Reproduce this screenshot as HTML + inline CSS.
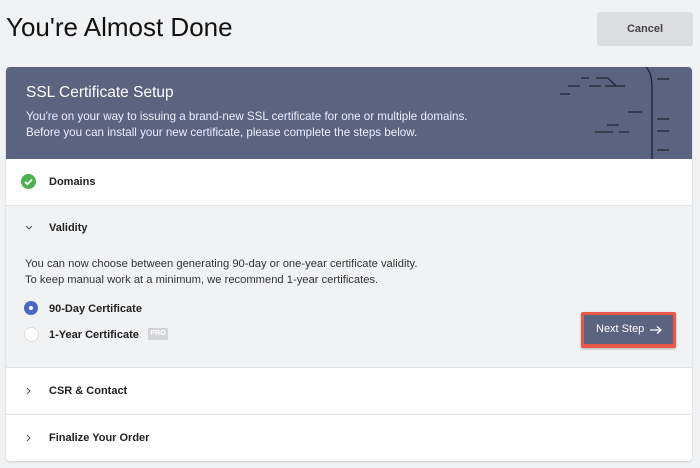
<!DOCTYPE html>
<html><head><style>
body{margin:0;width:700px;height:468px;background:#f1f2f4;font-family:"Liberation Sans",sans-serif;position:relative;overflow:hidden;color:#222}
h1{position:absolute;left:6px;top:12px;margin:0;font-size:26px;font-weight:normal;color:#111;letter-spacing:0px}
.cancel{position:absolute;left:597px;top:12px;width:96px;height:34px;background:#dcdde0;border-radius:3px;font-size:11px;font-weight:bold;color:#444;text-align:center;line-height:34px}
.card{position:absolute;left:6px;top:67px;width:686px;height:394px;background:#fff;border-radius:4px;overflow:hidden;box-shadow:0 1px 2px rgba(0,0,0,.15)}
.hdr{height:92px;background:#5a6380;color:#fff;position:relative}
.hdr .t{position:absolute;left:20px;top:17px;font-size:15.5px}
.hdr .d{position:absolute;left:20px;top:42px;font-size:11.6px;line-height:16px;color:#eef}
.row{height:46px;border-bottom:1px solid #e3e4e7;position:relative;font-size:11px;font-weight:bold;color:#222}
.row span{position:absolute;left:43px;top:17px}
.val{height:161px;background:#f1f2f4;border-bottom:1px solid #e3e4e7;position:relative;font-size:11px}
.chev{position:absolute;left:18px}
</style></head><body>
<h1>You're Almost Done</h1>
<div class="cancel">Cancel</div>
<div class="card">
 <div class="hdr">
  <div class="t">SSL Certificate Setup</div>
  <div class="d">You're on your way to issuing a brand-new SSL certificate for one or multiple domains.<br>Before you can install your new certificate, please complete the steps below.</div>
  <svg style="position:absolute;left:540px;top:0" width="146" height="92" stroke="#1f2433" stroke-width="1.3" fill="none">
   <path d="M100 0 Q106 6 106 20 V92"/>
   <path d="M35 11h8M50 11h12M62 11l8 8M59 19h20M22 19h12M43 19h12M14 27h10M82 45h14M61 58h12M49 65h18M73 65h10M111 12h12M111 52h12M111 64h12M111 83h12"/>
  </svg>
 </div>
 <div class="row">
  <svg style="position:absolute;left:15px;top:15px" width="15" height="15"><circle cx="7.5" cy="7.5" r="7.5" fill="#4caf50"/><path d="M4 7.8l2.5 2.4 4.6-4.8" stroke="#fff" stroke-width="1.8" fill="none"/></svg>
  <span>Domains</span>
 </div>
 <div class="val">
  <svg class="chev" style="top:18px" width="10" height="8"><path d="M2 2l3 3 3-3" stroke="#555" stroke-width="1" fill="none"/></svg>
  <div style="position:absolute;left:43px;top:16px;font-weight:bold">Validity</div>
  <div style="position:absolute;left:19px;top:50px;line-height:16px;color:#333;font-size:11.2px">You can now choose between generating 90-day or one-year certificate validity.<br>To keep manual work at a minimum, we recommend 1-year certificates.</div>
  <div style="position:absolute;left:18px;top:95px;width:14px;height:14px;border-radius:50%;background:#4a66c8"><div style="position:absolute;left:5px;top:5px;width:4px;height:4px;border-radius:50%;background:#fff"></div></div>
  <div style="position:absolute;left:43px;top:97px;font-weight:bold">90-Day Certificate</div>
  <div style="position:absolute;left:18px;top:121px;width:13px;height:13px;border-radius:50%;background:#fff;border:1px solid #ddd"></div>
  <div style="position:absolute;left:43px;top:123px;font-weight:bold">1-Year Certificate</div>
  <div style="position:absolute;left:142px;top:122px;width:20px;height:12px;background:#d3d4d8;color:#fff;font-size:7px;font-weight:bold;text-align:center;line-height:12px">PRO</div>
  <div style="position:absolute;left:575px;top:106px;width:95px;height:36px;background:#e8594a;border-radius:2px;box-shadow:0 1px 2px rgba(0,0,0,.3)">
   <div style="position:absolute;left:3px;top:3px;right:3px;bottom:4px;background:#5a6380;color:#fff;font-size:11px;line-height:29px;padding-left:12px">Next Step</div>
   <svg style="position:absolute;left:68px;top:13px" width="14" height="10"><path d="M1 5h11M8 1.5l4 3.5-4 3.5" stroke="#fff" stroke-width="1.2" fill="none"/></svg>
  </div>
 </div>
 <div class="row"><svg class="chev" style="top:18px;left:19px" width="8" height="10"><path d="M2 2l3 3-3 3" stroke="#555" stroke-width="1" fill="none"/></svg><span>CSR &amp; Contact</span></div>
 <div class="row" style="border:none"><svg class="chev" style="top:18px;left:19px" width="8" height="10"><path d="M2 2l3 3-3 3" stroke="#555" stroke-width="1" fill="none"/></svg><span>Finalize Your Order</span></div>
</div>
</body></html>
